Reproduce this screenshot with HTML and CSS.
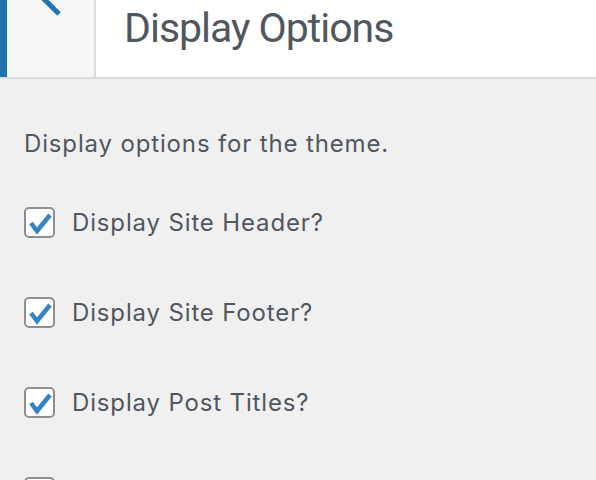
FILE: index.html
```html
<!DOCTYPE html>
<html>
<head>
<meta charset="utf-8">
<link rel="stylesheet" href="styles.css">
</head>
<body>
<div class="header">
  <div class="back">
    <svg class="chev" width="87" height="30" viewBox="0 0 87 30"><polyline points="52,-14 38,0 52,14" fill="none" stroke="#2271b1" stroke-width="5"/></svg>
  </div>
  <div class="title">Display Options</div>
</div>
<div class="content">
  <p class="desc">Display options for the theme.</p>
  <label class="row"><span class="box"><svg width="27" height="27" viewBox="0 0 27 27"><polyline points="5,14 11,22 24,6" fill="none" stroke="#3582c4" stroke-width="4.5"/></svg></span><span class="lbl">Display Site Header?</span></label>
  <label class="row"><span class="box"><svg width="27" height="27" viewBox="0 0 27 27"><polyline points="5,14 11,22 24,6" fill="none" stroke="#3582c4" stroke-width="4.5"/></svg></span><span class="lbl">Display Site Footer?</span></label>
  <label class="row"><span class="box"><svg width="27" height="27" viewBox="0 0 27 27"><polyline points="5,14 11,22 24,6" fill="none" stroke="#3582c4" stroke-width="4.5"/></svg></span><span class="lbl">Display Post Titles?</span></label>
  <label class="row"><span class="box"></span><span class="lbl">Display Post Dates?</span></label>
</div>
</body>
</html>
```
FILE: styles.css
```css
html, body { margin: 0; padding: 0; }
body {
  background: #f0f0f1;
  font-family: Inter, "Liberation Sans", sans-serif;
  color: #50575e;
  width: 596px;
  height: 480px;
  overflow: hidden;
}
.header {
  display: flex;
  height: 77px;
  background: #fff;
  border-bottom: 2px solid #dcdcde;
}
.back {
  width: 87px;
  background: #f6f7f7;
  border-left: 7px solid #2271b1;
  border-right: 2px solid #dcdcde;
}
.chev { display: block; }
.title {
  padding-left: 28px;
  font-family: Roboto, Inter, sans-serif;
  font-weight: 400;
  font-size: 41px;
  line-height: 56px;
  letter-spacing: -1px;
  color: #50575e;
}
.content { padding: 0 24px; }
.desc {
  margin: 0;
  padding-top: 50px;
  font-size: 24px;
  line-height: 30px;
  letter-spacing: 0.85px;
}
.row {
  display: flex;
  align-items: center;
  gap: 17px;
  margin-top: 59px;
  height: 31px;
}
.desc + .row { margin-top: 48px; }
.box {
  box-sizing: border-box;
  width: 31px;
  height: 31px;
  border: 2px solid #8c8f94;
  border-radius: 5px;
  background: #fff;
  flex: none;
}
.box svg { display: block; }
.lbl { font-size: 24px; line-height: 30px; letter-spacing: 0.85px; color: #50575e; }
```
